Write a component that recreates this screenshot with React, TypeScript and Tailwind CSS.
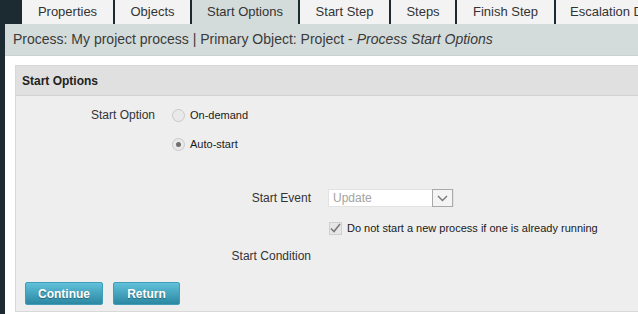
const tabs = [
  { label: "Properties", w: "w-[91px]" },
  { label: "Objects", w: "w-[75px]" },
  { label: "Start Options", w: "w-[106px]", active: true },
  { label: "Start Step", w: "w-[89px]" },
  { label: "Steps", w: "w-[64px]" },
  { label: "Finish Step", w: "w-[97px]" },
  { label: "Escalation Definition", w: "w-[130px]" },
];

function Radio({ checked }: { checked?: boolean }) {
  return (
    <span className="flex h-[13px] w-[13px] shrink-0 items-center justify-center rounded-full border border-[#c9c9c9] bg-[#e9e9e9]">
      {checked && <span className="h-[5px] w-[5px] rounded-full bg-[#6f6f6f]" />}
    </span>
  );
}

export default function App() {
  return (
    <div className="h-[314px] w-[638px] overflow-hidden bg-[#1c2a31] font-[family-name:Liberation_Sans,Arial,sans-serif] text-[#333]">
      {/* Tabs */}
      <div className="flex h-[24px] gap-[2px] pl-[22px]">
        {tabs.map((t) => (
          <div
            key={t.label}
            className={`${t.w} flex shrink-0 items-center whitespace-nowrap text-[13px] ${
              t.active ? "bg-[#d4dcdb]" : "bg-[#f3f3f3]"
            } ${t.label.startsWith("Escalation") ? "justify-start pl-[14px]" : "justify-center"}`}
          >
            {t.label}
          </div>
        ))}
      </div>

      <div className="ml-[5px] flex h-[290px] flex-col bg-white">
        {/* Process bar */}
        <div className="flex h-[32px] items-center border-b border-[#c9d2d1] bg-[#d4dcdb] pl-[8px] text-[14px] whitespace-nowrap text-[#3a3a3a]">
          Process: My project process | Primary Object: Project -&nbsp;<i>Process Start Options</i>
        </div>

        <div className="flex-1 pl-[10px] pt-[9px] pb-[2px]">
          <div className="flex h-full flex-col border border-r-0 border-[#d8d8d8] bg-[#eeeeee]">
            <div className="flex h-[30px] items-center border-b border-[#d2d2d2] bg-[#e0e0e0] pl-[6px] text-[12px] font-bold text-[#222]">
              Start Options
            </div>

            <div className="flex flex-col text-[12px]">
              <div className="mt-[6px] flex h-[26px] items-center">
                <div className="w-[139px] text-right">Start Option</div>
                <div className="ml-[17px] flex items-center gap-[5px] text-[11px] text-[#1a1a1a]">
                  <Radio />
                  On-demand
                </div>
              </div>
              <div className="mt-[3px] flex h-[26px] items-center">
                <div className="ml-[156px] flex items-center gap-[5px] text-[11px] text-[#1a1a1a]">
                  <Radio checked />
                  Auto-start
                </div>
              </div>

              <div className="mt-[30px] flex h-[22px] items-center">
                <div className="w-[295px] text-right">Start Event</div>
                <div className="ml-[17px] flex h-[18px] w-[126px] items-center justify-between border border-[#e2e2e2] bg-white">
                  <span className="pl-[4px] text-[12px] text-[#a3a3a3]">Update</span>
                  <span className="flex h-[18px] w-[21px] items-center justify-center border border-[#a9a9a9] bg-[#f4f4f4]">
                    <svg width="11" height="7" viewBox="0 0 11 7" fill="none">
                      <path d="M1 1l4.5 4.5L10 1" stroke="#777" strokeWidth="1.4" />
                    </svg>
                  </span>
                </div>
              </div>

              <div className="mt-[10px] flex h-[18px] items-center">
                <div className="ml-[313px] flex items-center gap-[5px] text-[11px] text-[#1a1a1a]">
                  <span className="flex h-[13px] w-[13px] items-center justify-center border border-[#cfcfcf] bg-[#e6e6e6]">
                    <svg width="11" height="10" viewBox="0 0 11 10" fill="none">
                      <path d="M1 5.5l3 3L10 1" stroke="#7a7a7a" strokeWidth="1.6" />
                    </svg>
                  </span>
                  Do not start a new process if one is already running
                </div>
              </div>

              <div className="mt-[10px] flex h-[18px] items-center">
                <div className="w-[295px] text-right">Start Condition</div>
              </div>

              <div className="mt-[17px] flex gap-[10px] pl-[9px]">
                <button className="h-[23px] w-[78px] rounded-[2px] border border-[#3f9db7] bg-linear-to-b from-[#60c1d9] to-[#2b88a3] text-[12px] font-bold text-white [text-shadow:0_1px_1px_rgba(0,0,0,0.35)]">
                  Continue
                </button>
                <button className="h-[23px] w-[67px] rounded-[2px] border border-[#3f9db7] bg-linear-to-b from-[#60c1d9] to-[#2b88a3] text-[12px] font-bold text-white [text-shadow:0_1px_1px_rgba(0,0,0,0.35)]">
                  Return
                </button>
              </div>
            </div>
          </div>
        </div>
      </div>
    </div>
  );
}
